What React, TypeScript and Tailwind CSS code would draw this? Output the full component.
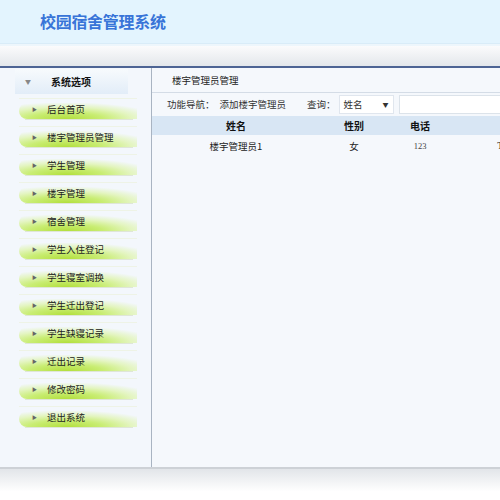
import React from "react";

const menu = [
  "后台首页",
  "楼宇管理员管理",
  "学生管理",
  "楼宇管理",
  "宿舍管理",
  "学生入住登记",
  "学生寝室调换",
  "学生迁出登记",
  "学生缺寝记录",
  "迁出记录",
  "修改密码",
  "退出系统",
];

export default function App() {
  return (
    <div
      className="w-[500px] h-[500px] overflow-hidden bg-white text-[#222]"
      style={{ fontFamily: '"Noto Sans CJK SC", "Liberation Sans", sans-serif' }}
    >
      {/* header */}
      <div className="h-[43px] bg-[#e3f4fe] flex items-center pl-[40px] pb-[2px]">
        <span className="text-[16px] font-bold text-[#3874d8] tracking-[-0.3px]">校园宿舍管理系统</span>
      </div>
      <div className="h-[3px] bg-[#edf6fc] border-t border-[#d9ecf8]" />
      <div className="h-[22px] bg-[linear-gradient(to_bottom,#fbfbfc,#e3e7eb)] border-b-2 border-[#4d6494]" />

      {/* body */}
      <div className="flex h-[399px]">
        {/* sidebar */}
        <div className="w-[152px] shrink-0 bg-[#f3f7fc] border-r border-[#a9b4c2] pt-[1px]">
          <div className="ml-[15px] w-[113px] h-[25px] bg-[linear-gradient(to_bottom,#f7fafd,#e2edf8)] flex items-center">
            <span className="ml-[10px] text-[6px] text-[#888]">▼</span>
            <span className="ml-[20px] text-[10px] font-bold text-[#111]">系统选项</span>
          </div>
          <div className="flex flex-col -mt-[2px]">
            {menu.map((m) => (
              <div key={m} className="h-[28px] flex flex-col justify-end">
                <div className="ml-[19px] w-[118px] h-[22px] relative border-t border-[#eef3e6]">
                  <div className="absolute left-0 right-0 bottom-[1px] h-[16px] rounded-l-[10px] bg-[radial-gradient(ellipse_90%_120%_at_40%_100%,#b2df3c_0%,#c9ed74_35%,rgba(222,244,172,0.75)_62%,rgba(255,255,255,0)_88%)]" />
                  <div className="absolute left-[6px] right-[4px] bottom-0 h-[1px] bg-[#dfe6d8]" />
                  <div className="relative h-full flex items-center pb-[1px]">
                    <span className="ml-[13px] text-[5px] text-[#666]">▶</span>
                    <span className="ml-[10px] text-[9.5px] text-[#222]">{m}</span>
                  </div>
                </div>
              </div>
            ))}
          </div>
        </div>

        {/* main */}
        <div className="flex-1 bg-[#f5f8fc] overflow-hidden">
          <div className="h-[25px] border-b border-[#d4dce6] flex items-center pl-[20px]">
            <span className="text-[9.5px] text-[#222]">楼宇管理员管理</span>
          </div>
          <div className="h-[23px] flex items-center pl-[15px] text-[9.5px] text-[#333] whitespace-nowrap">
            <span>功能导航：</span>
            <span className="ml-[5px]">添加楼宇管理员</span>
            <span className="ml-[21px]">查询：</span>
            <div className="ml-[3px] w-[55px] shrink-0 h-[19px] bg-white border border-[#e0e6ee] flex items-center justify-between pl-[4px] pr-[4px]">
              <span>姓名</span>
              <span className="text-[6px]">▼</span>
            </div>
            <div className="ml-[5px] w-[200px] h-[19px] bg-white border border-[#dce3ea] shrink-0" />
          </div>
          <div className="w-[440px]">
            <div className="h-[19px] bg-[#d8e6f4] flex items-center text-[10px] font-bold text-[#111] whitespace-nowrap">
              <div className="w-[168px] text-center">姓名</div>
              <div className="w-[68px] text-center">性别</div>
              <div className="w-[64px] text-center">电话</div>
              <div className="w-[136px] text-center">所属楼宇</div>
            </div>
            <div className="h-[22px] flex items-center text-[9.5px] text-[#222] whitespace-nowrap">
              <div className="w-[168px] text-center">楼宇管理员1</div>
              <div className="w-[68px] text-center">女</div>
              <div className="w-[64px] text-center text-[8.5px] text-[#444]" style={{ fontFamily: '"Liberation Serif", serif' }}>123</div>
              <div className="w-[136px] text-center" style={{ fontFamily: '"Liberation Serif", serif' }}>T1楼宇1号</div>
            </div>
          </div>
        </div>
      </div>

      {/* footer */}
      <div className="h-[32px] border-t-2 border-[#cdd1d6] bg-[linear-gradient(to_bottom,#e2e5e9,#ffffff_75%)]" />
    </div>
  );
}
